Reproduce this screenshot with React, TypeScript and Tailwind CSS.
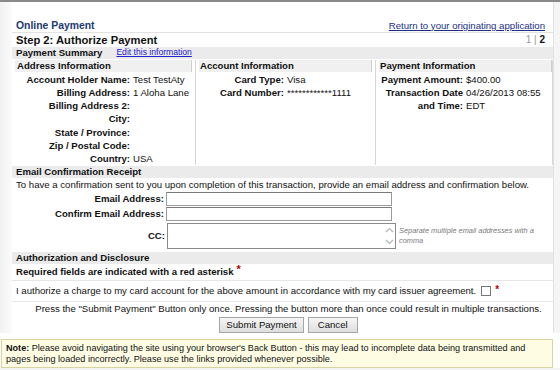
import React from "react";

const Row = ({ label, value, lw }: { label: React.ReactNode; value?: React.ReactNode; lw: string }) => (
  <div className="flex leading-[13.2px]">
    <div className={`${lw} shrink-0 text-right font-bold pr-[3px]`}>{label}</div>
    <div>{value}</div>
  </div>
);

export default function App() {
  return (
    <div className="w-[560px] h-[370px] overflow-hidden bg-white flex flex-col font-['Liberation_Sans',Arial,sans-serif] text-[9.6px] text-[#111]">
      <div className="h-[2px] bg-[#8a8a8a] shrink-0" />
      <div className="flex h-[331px] shrink-0">
        <div className="w-[12px] bg-gradient-to-r from-[#f1f1f1] to-[#fbfbfb]" />
        <div className="w-[541px] pt-[16px] flex flex-col">
          {/* header */}
          <div className="flex justify-between items-end h-[15px] pl-[4px] pr-[8px] border-b border-[#e2e2e2]">
            <span className="font-bold text-[10.4px] text-[#1c3a72] leading-[13px]">Online Payment</span>
            <a className="underline text-[#1b2f86] leading-[13px]">Return to your originating application</a>
          </div>
          <div className="flex justify-between items-center h-[14px] pl-[4px] pr-[8px]">
            <span className="font-bold text-[11.2px] leading-[14px]">Step 2: Authorize Payment</span>
            <span className="text-[10px]"><span className="text-[#999]">1 | </span><span className="font-bold">2</span></span>
          </div>
          <div className="h-[12px] bg-[#ebebeb] flex items-center pl-[4px] gap-[14px]">
            <span className="font-bold">Payment Summary</span>
            <a className="underline text-[#2020d0] text-[8.6px]">Edit this information</a>
          </div>
          {/* columns */}
          <div className="flex mt-[1px] pl-[3px] h-[105px]">
            <div className="w-[181px] border-r border-[#d6d6d6]">
              <div className="h-[12px] bg-[#f0f0f0] border-r border-[#cfcfcf] font-bold pl-[2px] leading-[12px] mr-[3px]">Address Information</div>
              <div className="pt-[1px]">
                <Row lw="w-[118px]" label="Account Holder Name:" value="Test TestAty" />
                <Row lw="w-[118px]" label="Billing Address:" value="1 Aloha Lane" />
                <Row lw="w-[118px]" label="Billing Address 2:" />
                <Row lw="w-[118px]" label="City:" />
                <Row lw="w-[118px]" label="State / Province:" />
                <Row lw="w-[118px]" label="Zip / Postal Code:" />
                <Row lw="w-[118px]" label="Country:" value="USA" />
              </div>
            </div>
            <div className="w-[180px] border-r border-[#d6d6d6] pl-[3px]">
              <div className="h-[12px] bg-[#f0f0f0] border-r border-[#cfcfcf] font-bold pl-[1px] leading-[12px] mr-[3px]">Account Information</div>
              <div className="pt-[1px]">
                <Row lw="w-[88px]" label="Card Type:" value="Visa" />
                <Row lw="w-[88px]" label="Card Number:" value="************1111" />
              </div>
            </div>
            <div className="w-[177px] border-r border-[#d6d6d6] pl-[3px]">
              <div className="h-[12px] bg-[#f0f0f0] border-r border-[#cfcfcf] font-bold pl-[1px] leading-[12px]">Payment Information</div>
              <div className="pt-[1px]">
                <Row lw="w-[87px]" label="Payment Amount:" value="$400.00" />
                <Row lw="w-[87px]" label={<>Transaction Date<br />and Time:</>} value={<>04/26/2013 08:55<br />EDT</>} />
              </div>
            </div>
          </div>
          {/* email */}
          <div className="h-[12px] bg-[#ebebeb] mt-[1px] font-bold pl-[4px] leading-[12px]">Email Confirmation Receipt</div>
          <div className="pl-[4px] leading-[14px] h-[14px]">To have a confirmation sent to you upon completion of this transaction, provide an email address and confirmation below.</div>
          <div className="flex items-center h-[15px]">
            <div className="w-[154px] text-right font-bold pr-[2px]">Email Address:</div>
            <div className="w-[226px] h-[14px] border border-[#9a9a9a] border-t-[#7a7a7a] bg-white" />
          </div>
          <div className="flex items-center h-[15px]">
            <div className="w-[154px] text-right font-bold pr-[2px]">Confirm Email Address:</div>
            <div className="w-[226px] h-[14px] border border-[#9a9a9a] border-t-[#7a7a7a] bg-white" />
          </div>
          <div className="flex items-center h-[27px] mt-[2px]">
            <div className="w-[155px] text-right font-bold pr-[2px]">CC:</div>
            <div className="w-[229px] h-[26px] border border-[#8a8a8a] bg-white flex justify-end items-stretch">
              <div className="w-[12px] flex flex-col justify-between items-center py-[3px]">
                <svg width="9" height="6" viewBox="0 0 9 6"><path d="M1 5 L4.5 1.5 L8 5" stroke="#b8b8b8" strokeWidth="1.2" fill="none" /></svg>
                <svg width="9" height="6" viewBox="0 0 9 6"><path d="M1 1 L4.5 4.5 L8 1" stroke="#b8b8b8" strokeWidth="1.2" fill="none" /></svg>
              </div>
            </div>
            <div className="ml-[3px] italic text-[7.4px] text-[#7a7a7a] leading-[10px] w-[150px]">Separate multiple email addresses with a comma</div>
          </div>
          {/* authorization */}
          <div className="h-[12px] bg-[#ebebeb] mt-[2px] font-bold pl-[4px] leading-[12px]">Authorization and Disclosure</div>
          <div className="h-[18px] pl-[4px] flex items-center font-bold border-b border-[#e6e6e6]">
            Required fields are indicated with a red asterisk<span className="text-[#c00000] text-[11px] ml-[3px] relative top-[-3px]">*</span>
          </div>
          <div className="h-[21px] pl-[4px] flex items-center border-b border-[#e6e6e6]">
            I authorize a charge to my card account for the above amount in accordance with my card issuer agreement.
            <span className="inline-block w-[10px] h-[10px] border border-[#777] bg-white ml-[5px]" />
            <span className="text-[#c00000] font-bold text-[10px] ml-[4px] relative top-[-2px]">*</span>
          </div>
          <div className="h-[13px] flex items-center justify-center pl-[12px] mt-[1px]">
            Press the "Submit Payment" Button only once. Pressing the button more than once could result in multiple transactions.
          </div>
          <div className="flex justify-center gap-[4px] h-[16px] pl-[12px] mt-[1px]">
            <button className="h-[16px] px-[6px] border border-[#a6a6a6] bg-gradient-to-b from-[#f6f6f6] to-[#dedede] text-[9.6px] leading-[14px] text-[#111]">Submit Payment</button>
            <button className="h-[16px] px-[9px] border border-[#a6a6a6] bg-gradient-to-b from-[#f6f6f6] to-[#dedede] text-[9.6px] leading-[14px] text-[#111]">Cancel</button>
          </div>
        </div>
        <div className="w-[7px] bg-[#f5f5f5] border-l border-[#e2e2e2]" />
      </div>
      <div className="h-[6px] bg-white shrink-0" />
      <div className="h-[29px] mx-[1px] w-[552px] border border-[#d8d2a4] bg-[#fefde4] px-[4px] pt-[3px] text-[9.1px] leading-[11px] shrink-0">
        <span className="font-bold">Note:</span> Please avoid navigating the site using your browser's Back Button - this may lead to incomplete data being transmitted and pages being loaded incorrectly. Please use the links provided whenever possible.
      </div>
      <div className="flex-1 bg-[#f3f3f3]" />
    </div>
  );
}
